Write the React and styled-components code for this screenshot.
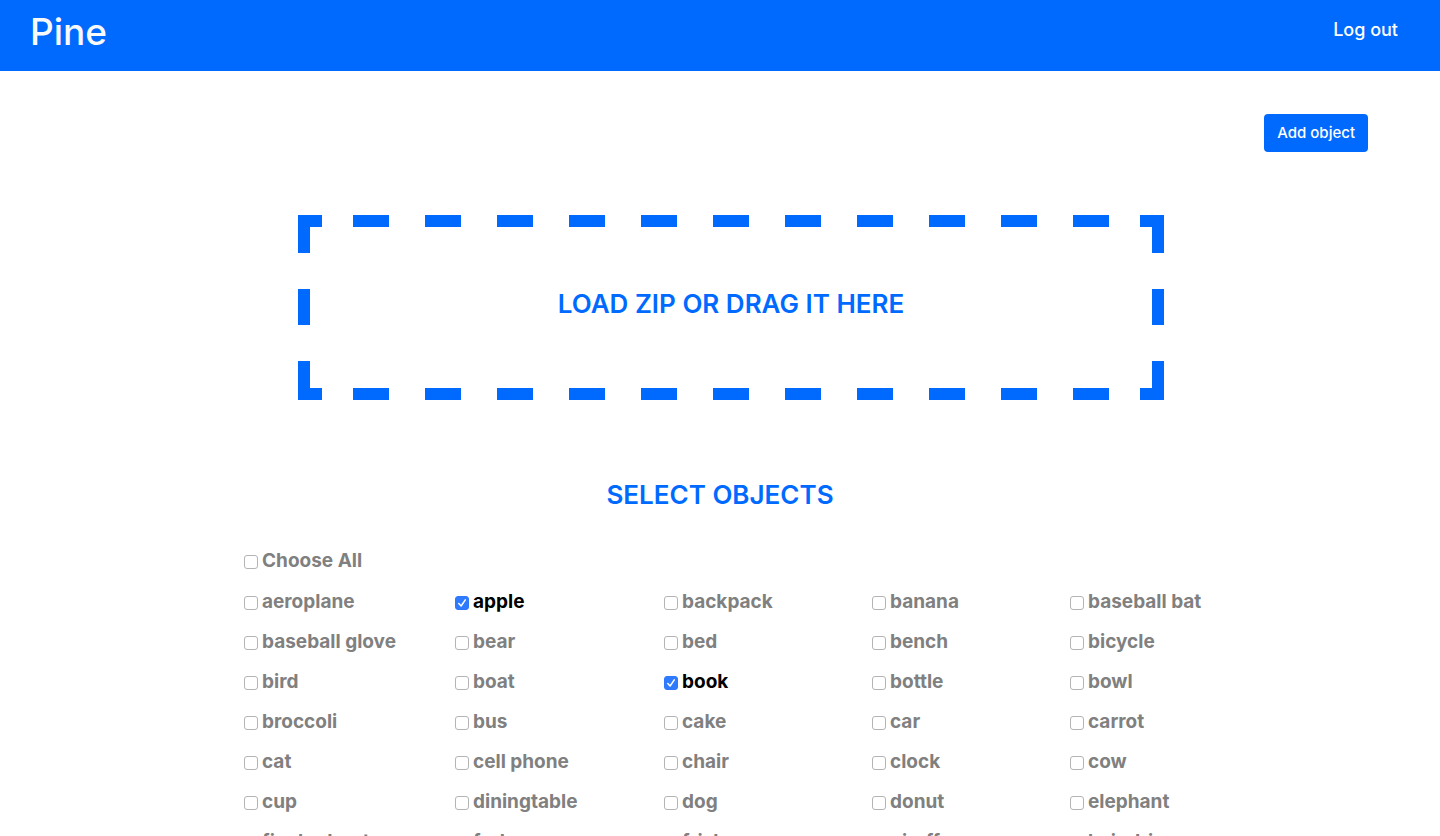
import React, { useState } from "react";
import styled, { createGlobalStyle } from "styled-components";

const BLUE = "#006aff";

const GlobalStyle = createGlobalStyle`
  *, *::before, *::after { box-sizing: border-box; }
  body {
    margin: 0;
    background: #fff;
    color: #000;
    font-family: Inter, "Liberation Sans", sans-serif;
    font-size: 16px;
    line-height: 24px;
    -webkit-font-smoothing: antialiased;
  }
`;

const Header = styled.header`
  display: flex;
  justify-content: space-between;
  align-items: flex-start;
  padding: 8px 42px 15px 30px;
  background: ${BLUE};
`;

const Brand = styled.h1`
  margin: 0;
  color: #f8f9fa;
  font-size: 37px;
  font-weight: 500;
  line-height: 48px;
`;

const LogoutLink = styled.a`
  padding-top: 8px;
  color: #fff;
  font-size: 18px;
  font-weight: 500;
  line-height: 28px;
  text-decoration: none;
`;

const Toolbar = styled.div`
  display: flex;
  justify-content: flex-end;
  padding: 43px 72px 63px;
`;

const AddButton = styled.button`
  padding: 8px 13px;
  border: 0;
  border-radius: 4px;
  background: ${BLUE};
  color: #fff;
  font: inherit;
  font-size: 15px;
  font-weight: 500;
  line-height: 22px;
  cursor: pointer;
`;

const solid = `linear-gradient(${BLUE}, ${BLUE})`;
const dash = (direction) =>
  `linear-gradient(${direction}, transparent 18px, ${BLUE} 18px 54px, transparent 54px)`;

const DropZone = styled.button`
  display: flex;
  align-items: center;
  justify-content: center;
  width: calc(100% - 574px);
  margin: 0 276px 0 298px;
  padding: 71px 24px 78px;
  border: 0;
  background:
    ${solid} left top / 24px 12px no-repeat,
    ${solid} right top / 24px 12px no-repeat,
    ${solid} left bottom / 24px 12px no-repeat,
    ${solid} right bottom / 24px 12px no-repeat,
    ${dash("to right")} center top / 72px 12px repeat-x,
    ${dash("to right")} center bottom / 72px 12px repeat-x,
    ${dash("to bottom")} left 56px / 12px 72px repeat-y,
    ${dash("to bottom")} right 56px / 12px 72px repeat-y;
  color: ${BLUE};
  font: inherit;
  font-size: 26px;
  font-weight: 600;
  line-height: 36px;
  cursor: pointer;
`;

const SectionTitle = styled.h2`
  margin: 77px 0 28px;
  color: ${BLUE};
  font-size: 26px;
  font-weight: 600;
  line-height: 36px;
  text-align: center;
`;

const Objects = styled.section`
  padding: 0 237px 24px 244px;
`;

const ObjectGrid = styled.div`
  display: grid;
  grid-template-columns:
    minmax(0, 211fr) minmax(0, 209fr) minmax(0, 208fr)
    minmax(0, 198fr) minmax(0, 133fr);
  margin-top: 1px;
`;

const Option = styled.label`
  display: flex;
  align-items: center;
  gap: 4px;
  height: 40px;
  color: ${(p) => (p.$checked ? "#000" : "#808080")};
  font-size: 19px;
  font-weight: 700;
  white-space: nowrap;
`;

const BoxWrap = styled.span`
  display: grid;
  flex: none;
  margin-top: 2px;

  & > * {
    grid-area: 1 / 1;
  }
`;

const Box = styled.input`
  appearance: none;
  width: 14px;
  height: 14px;
  margin: 0;
  border: 1px solid #b4b4b4;
  border-radius: 3px;
  background: #fff;

  &:checked {
    border-color: #2f77fb;
    background: #2f7bff;
  }
`;

const Tick = styled.svg`
  width: 14px;
  height: 14px;
  pointer-events: none;
`;

const ROWS = [
  "aeroplane", "apple", "backpack", "banana", "baseball bat",
  "baseball glove", "bear", "bed", "bench", "bicycle",
  "bird", "boat", "book", "bottle", "bowl",
  "broccoli", "bus", "cake", "car", "carrot",
  "cat", "cell phone", "chair", "clock", "cow",
  "cup", "diningtable", "dog", "donut", "elephant",
  "fire hydrant", "fork", "frisbee", "giraffe", "hair drier",
];

function ObjectOption({ name, checked, onChange }) {
  return (
    <Option $checked={checked}>
      <BoxWrap>
        <Box type="checkbox" checked={checked} onChange={onChange} />
        {checked && (
          <Tick viewBox="0 0 14 14" aria-hidden="true">
            <path
              d="M3.8 7.5 6.1 10 10.3 3.9"
              fill="none"
              stroke="#fff"
              strokeWidth="1.5"
              strokeLinecap="round"
              strokeLinejoin="round"
            />
          </Tick>
        )}
      </BoxWrap>
      {name}
    </Option>
  );
}

export default function App() {
  const [selected, setSelected] = useState(["apple", "book"]);
  const all = selected.length === ROWS.length;
  const toggle = (name) =>
    setSelected((current) =>
      current.includes(name)
        ? current.filter((item) => item !== name)
        : [...current, name]
    );

  return (
    <>
      <GlobalStyle />
      <Header>
        <Brand>Pine</Brand>
        <LogoutLink href="#logout">Log out</LogoutLink>
      </Header>
      <main>
        <Toolbar>
          <AddButton type="button">Add object</AddButton>
        </Toolbar>
        <DropZone type="button">LOAD ZIP OR DRAG IT HERE</DropZone>
        <SectionTitle>SELECT OBJECTS</SectionTitle>
        <Objects>
          <ObjectOption
            name="Choose All"
            checked={all}
            onChange={() => setSelected(all ? [] : ROWS)}
          />
          <ObjectGrid>
            {ROWS.map((name) => (
              <ObjectOption
                key={name}
                name={name}
                checked={selected.includes(name)}
                onChange={() => toggle(name)}
              />
            ))}
          </ObjectGrid>
        </Objects>
      </main>
    </>
  );
}
